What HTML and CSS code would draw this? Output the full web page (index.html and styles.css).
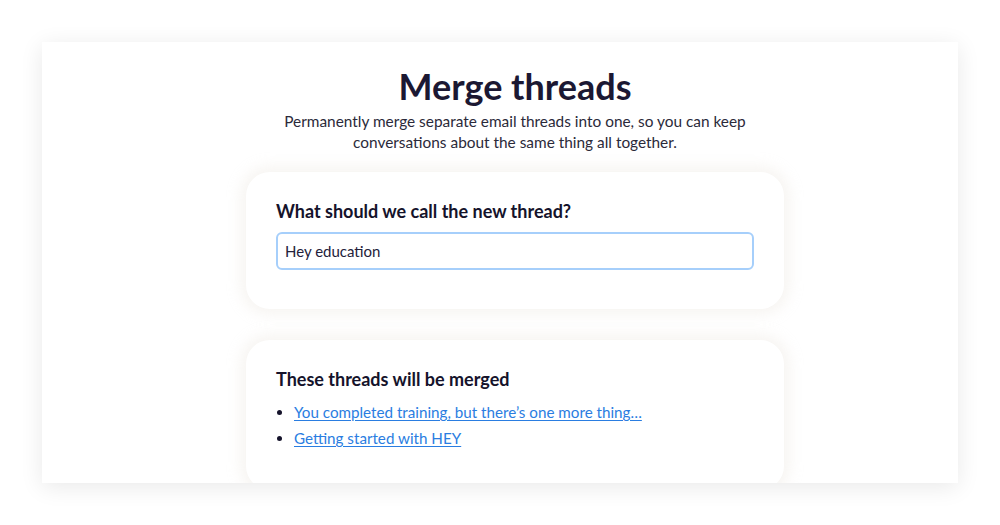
FILE: index.html
```html
<!DOCTYPE html>
<html lang="en">
<head>
<meta charset="utf-8">
<title>Merge threads</title>
<link rel="stylesheet" href="styles.css">
</head>
<body>
<main class="panel">
  <header class="intro">
    <h1 class="title">Merge threads</h1>
    <p class="lede">Permanently merge separate email threads into one, so you can keep conversations about the same thing all together.</p>
  </header>
  <section class="card">
    <label class="card-heading" for="thread-name">What should we call the new thread?</label>
    <input class="text-input" id="thread-name" type="text" value="Hey education">
  </section>
  <section class="card">
    <h2 class="card-heading">These threads will be merged</h2>
    <ul class="thread-list">
      <li><a href="#">You completed training, but there’s one more thing…</a></li>
      <li><a href="#">Getting started with HEY</a></li>
    </ul>
  </section>
</main>
</body>
</html>
```

FILE: styles.css
```css
html, body {
  margin: 0;
  padding: 0;
  background: #ffffff;
}

body {
  padding: 42px;
  height: 525px;
  box-sizing: border-box;
  overflow: hidden;
  font-family: "Lato", "Noto Sans", sans-serif;
  color: #1c1a30;
}

.panel {
  height: 441px;
  background: #ffffff;
  box-shadow: 0 4px 22px rgba(0, 0, 0, 0.09);
  overflow: hidden;
  display: flex;
  flex-direction: column;
  align-items: center;
  padding-top: 24px;
  padding-left: 30px;
  box-sizing: border-box;
}

.intro {
  text-align: center;
  width: 480px;
}

.title {
  margin: 0;
  font-size: 36px;
  line-height: 40px;
  font-weight: 700;
  color: #1b1833;
}

.lede {
  margin: 5px 0 0;
  font-size: 15.4px;
  line-height: 21px;
  color: #2b2a3a;
}

.card {
  width: 538px;
  box-sizing: border-box;
  background: #ffffff;
  border-radius: 24px;
  box-shadow: 0 0 14px 6px rgba(226, 220, 210, 0.28);
  padding: 28px 30px 39px;
  margin-top: 19px;
  display: flex;
  flex-direction: column;
  flex-shrink: 0;
}

.card + .card {
  margin-top: 31px;
}

.card-heading {
  margin: 0;
  font-size: 18px;
  line-height: 22px;
  font-weight: 700;
  color: #15132b;
}

.text-input {
  margin-top: 10px;
  height: 38px;
  box-sizing: border-box;
  border: 2px solid #a6cffb;
  border-radius: 6px;
  padding: 0 7px;
  font: inherit;
  font-size: 15px;
  color: #23213a;
  outline: none;
}

.thread-list {
  margin: 9px 0 0;
  padding-left: 18px;
  font-size: 15.2px;
  line-height: 26px;
}

.thread-list li::marker {
  color: #15132b;
}

.thread-list a {
  color: #2a7de1;
  text-decoration: underline;
  text-underline-offset: 2px;
}
```
